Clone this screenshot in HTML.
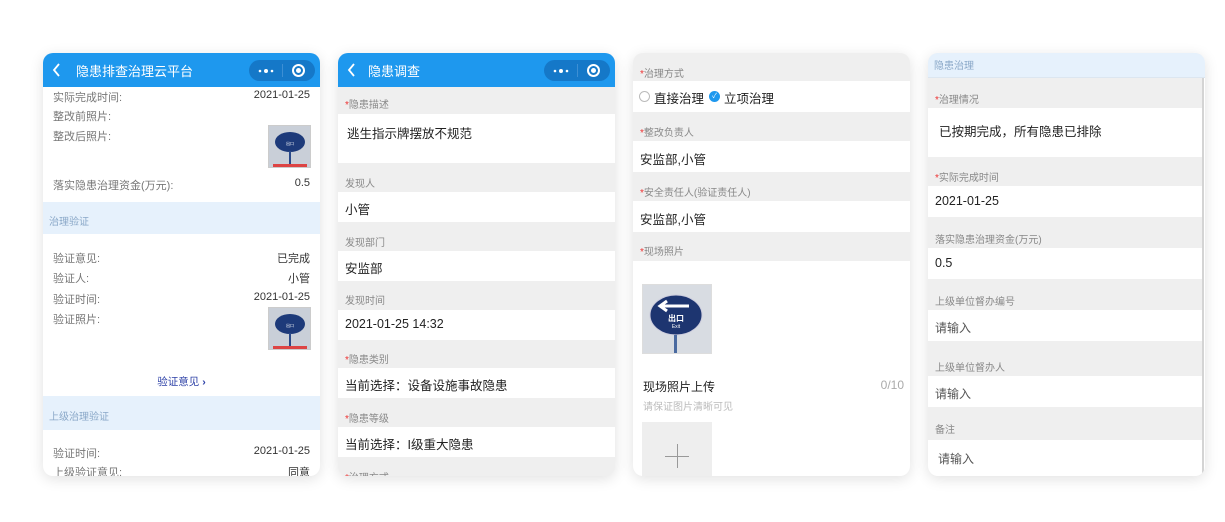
<!DOCTYPE html>
<html><head><meta charset="utf-8"><style>
*{margin:0;padding:0;box-sizing:border-box}
body{width:1225px;height:522px;background:#fff;position:relative;overflow:hidden;font-family:"Liberation Sans","Noto Sans CJK SC",sans-serif;color:#222}
.p{position:absolute;top:53px;width:277px;height:423px;border-radius:10px;overflow:hidden;box-shadow:0 3px 14px rgba(0,0,0,.12)}
.a{position:absolute}
.hd{position:absolute;left:0;top:0;width:277px;height:34px;background:#1e98ee;color:#fff;font-size:13px}
.cap{position:absolute;left:206px;top:7px;width:66px;height:21px;border-radius:11px;background:#1578c8}
.lb{position:absolute;left:7px;font-size:10px;color:#888}
.lb i{color:#e33;font-style:normal}
.w{position:absolute;left:0;width:277px;background:#fff}
.v{position:absolute;left:7px;font-size:12.5px;color:#222}
.r{position:absolute;font-size:11px;color:#777;left:10px}
.rv{position:absolute;font-size:11px;color:#333;right:10px}
.sec{position:absolute;left:0;width:277px;background:#e6f1fc;color:#8aa8c8;font-size:10px;padding-left:6px}
.ph{position:absolute;border:1px solid #ccc;background:#c9cfd8;overflow:hidden}
</style></head><body>

<!-- panel 1 -->
<div class="p" style="left:43px;background:#fff">
 <div class="r" style="top:36px">实际完成时间:</div><div class="rv" style="top:36px">2021-01-25</div>
 <div class="r" style="top:55px">整改前照片:</div>
 <div class="r" style="top:75px">整改后照片:</div>
 <div class="ph" style="left:225px;top:72px;width:43px;height:43px"><svg width="43" height="43"><ellipse cx="21" cy="16" rx="15" ry="10" fill="#1d3a7a"/><rect x="20" y="25" width="2" height="14" fill="#2a4a8a"/><text x="21" y="19" font-size="4" fill="#fff" text-anchor="middle">出口</text><rect x="4" y="38" width="34" height="3" fill="#d44"/></svg></div>
 <div class="r" style="top:124px">落实隐患治理资金(万元):</div><div class="rv" style="top:124px">0.5</div>
 <div class="sec" style="top:149px;height:32px;line-height:42px">治理验证</div>
 <div class="r" style="top:197px">验证意见:</div><div class="rv" style="top:197px">已完成</div>
 <div class="r" style="top:217px">验证人:</div><div class="rv" style="top:217px">小管</div>
 <div class="r" style="top:238px">验证时间:</div><div class="rv" style="top:238px">2021-01-25</div>
 <div class="r" style="top:258px">验证照片:</div>
 <div class="ph" style="left:225px;top:254px;width:43px;height:43px"><svg width="43" height="43"><ellipse cx="21" cy="16" rx="15" ry="10" fill="#1d3a7a"/><rect x="20" y="25" width="2" height="14" fill="#2a4a8a"/><text x="21" y="19" font-size="4" fill="#fff" text-anchor="middle">出口</text><rect x="4" y="38" width="34" height="3" fill="#d44"/></svg></div>
 <div class="a" style="left:0;width:277px;top:321px;text-align:center;font-size:10.5px;color:#2b3fa6">验证意见 <b>›</b></div>
 <div class="sec" style="top:343px;height:34px;line-height:44px">上级治理验证</div>
 <div class="r" style="top:392px">验证时间:</div><div class="rv" style="top:392px">2021-01-25</div>
 <div class="r" style="top:411px">上级验证意见:</div><div class="rv" style="top:411px">同意</div>
 <div class="hd"><svg class="a" style="left:9px;top:10px" width="10" height="14"><path d="M7 1L2 7l5 6" fill="none" stroke="#fff" stroke-width="1.8"/></svg><span class="a" style="left:33px;top:8px">隐患排查治理云平台</span>
  <div class="cap"><svg class="a" style="left:8px;top:8px" width="18" height="6"><circle cx="3" cy="3" r="1.3" fill="#fff"/><circle cx="9" cy="3" r="2" fill="#fff"/><circle cx="15" cy="3" r="1.3" fill="#fff"/></svg><span class="a" style="left:33px;top:4px;width:1px;height:13px;background:#3d8fd4"></span><span class="a" style="left:43px;top:4px;width:13px;height:13px;border:2px solid #fff;border-radius:50%"></span><span class="a" style="left:47px;top:8px;width:5px;height:5px;background:#fff;border-radius:50%"></span></div>
 </div>
</div>

<!-- panel 2 -->
<div class="p" style="left:338px;background:#efefef">
 <div class="lb" style="top:43px"><i>*</i>隐患描述</div>
 <div class="w" style="top:61px;height:49px"></div><div class="v" style="left:9px;top:70px">逃生指示牌摆放不规范</div>
 <div class="lb" style="top:122px">发现人</div>
 <div class="w" style="top:139px;height:30px"></div><div class="v" style="top:146px">小管</div>
 <div class="lb" style="top:181px">发现部门</div>
 <div class="w" style="top:198px;height:30px"></div><div class="v" style="top:205px">安监部</div>
 <div class="lb" style="top:239px">发现时间</div>
 <div class="w" style="top:257px;height:30px"></div><div class="v" style="top:264px">2021-01-25 14:32</div>
 <div class="lb" style="top:298px"><i>*</i>隐患类别</div>
 <div class="w" style="top:315px;height:30px"></div><div class="v" style="top:322px">当前选择：设备设施事故隐患</div>
 <div class="lb" style="top:357px"><i>*</i>隐患等级</div>
 <div class="w" style="top:374px;height:30px"></div><div class="v" style="top:381px">当前选择：I级重大隐患</div>
 <div class="lb" style="top:416px"><i>*</i>治理方式</div>
 <div class="hd"><svg class="a" style="left:9px;top:10px" width="10" height="14"><path d="M7 1L2 7l5 6" fill="none" stroke="#fff" stroke-width="1.8"/></svg><span class="a" style="left:30px;top:8px">隐患调查</span>
  <div class="cap"><svg class="a" style="left:8px;top:8px" width="18" height="6"><circle cx="3" cy="3" r="1.3" fill="#fff"/><circle cx="9" cy="3" r="2" fill="#fff"/><circle cx="15" cy="3" r="1.3" fill="#fff"/></svg><span class="a" style="left:33px;top:4px;width:1px;height:13px;background:#3d8fd4"></span><span class="a" style="left:43px;top:4px;width:13px;height:13px;border:2px solid #fff;border-radius:50%"></span><span class="a" style="left:47px;top:8px;width:5px;height:5px;background:#fff;border-radius:50%"></span></div>
 </div>
</div>

<!-- panel 3 -->
<div class="p" style="left:633px;background:#efefef">
 <div class="lb" style="top:12px"><i>*</i>治理方式</div>
 <div class="w" style="top:28px;height:31px"></div>
 <div class="a" style="left:6px;top:38px;width:11px;height:11px;border:1px solid #bbb;border-radius:50%;background:#fff"></div>
 <div class="v" style="left:21px;top:35px">直接治理</div>
 <div class="a" style="left:76px;top:38px;width:11px;height:11px;border-radius:50%;background:#1e98ee;color:#fff;font-size:7px;text-align:center;line-height:11px">✓</div>
 <div class="v" style="left:91px;top:35px">立项治理</div>
 <div class="lb" style="top:71px"><i>*</i>整改负责人</div>
 <div class="w" style="top:88px;height:31px"></div><div class="v" style="top:96px">安监部,小管</div>
 <div class="lb" style="top:131px"><i>*</i>安全责任人(验证责任人)</div>
 <div class="w" style="top:148px;height:31px"></div><div class="v" style="top:156px">安监部,小管</div>
 <div class="lb" style="top:190px"><i>*</i>现场照片</div>
 <div class="w" style="top:208px;height:215px"></div>
 <div class="ph" style="left:9px;top:231px;width:70px;height:70px;background:#d8dce2;border-color:#ddd"><svg width="70" height="70"><ellipse cx="33" cy="30" rx="26" ry="20" fill="#1d3570" stroke="#ccd" stroke-width="1"/><path d="M18 21h28" stroke="#fff" stroke-width="3"/><path d="M24 16l-7 5 7 5" fill="none" stroke="#fff" stroke-width="3"/><text x="33" y="36" font-size="8" fill="#fff" text-anchor="middle" font-weight="bold">出口</text><text x="33" y="43" font-size="5" fill="#fff" text-anchor="middle">Exit</text><rect x="31" y="50" width="3" height="20" fill="#4a6aa0"/></svg></div>
 <div class="a" style="left:10px;top:325px;font-size:12px;color:#222">现场照片上传</div>
 <div class="a" style="right:6px;top:325px;font-size:12px;color:#aaa">0/10</div>
 <div class="a" style="left:10px;top:345px;font-size:10px;color:#bbb">请保证图片清晰可见</div>
 <div class="a" style="left:9px;top:369px;width:70px;height:60px;background:#eee"><div class="a" style="left:23px;top:34px;width:24px;height:1px;background:#999"></div><div class="a" style="left:35px;top:22px;width:1px;height:24px;background:#999"></div></div>
</div>

<!-- panel 4 -->
<div class="p" style="left:928px;background:#efefef">
 <div class="lb" style="top:38px"><i>*</i>治理情况</div>
 <div class="w" style="top:55px;height:49px"></div><div class="v" style="left:11px;top:68px">已按期完成，所有隐患已排除</div>
 <div class="lb" style="top:116px"><i>*</i>实际完成时间</div>
 <div class="w" style="top:133px;height:31px"></div><div class="v" style="top:141px">2021-01-25</div>
 <div class="lb" style="top:178px">落实隐患治理资金(万元)</div>
 <div class="w" style="top:195px;height:31px"></div><div class="v" style="top:203px">0.5</div>
 <div class="lb" style="top:240px">上级单位督办编号</div>
 <div class="w" style="top:257px;height:31px"></div><div class="v" style="top:266px;color:#555;font-size:12px">请输入</div>
 <div class="lb" style="top:306px">上级单位督办人</div>
 <div class="w" style="top:323px;height:31px"></div><div class="v" style="top:332px;color:#555;font-size:12px">请输入</div>
 <div class="lb" style="top:368px">备注</div>
 <div class="w" style="top:387px;height:36px"></div><div class="v" style="left:10px;top:397px;color:#555;font-size:12px">请输入</div>
 <div class="a" style="left:274px;top:0;width:3px;height:423px;background:#fff"></div>
 <div class="a" style="left:274px;top:25px;width:2px;height:398px;background:#d4d4d4"></div>
 <div class="sec" style="top:0;height:25px;line-height:28px;border-bottom:1px solid #dce6f0">隐患治理</div>
</div>
</body></html>
